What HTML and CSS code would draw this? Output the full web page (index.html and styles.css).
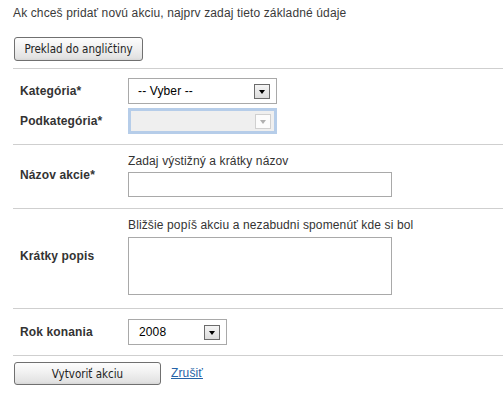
FILE: index.html
```html
<!DOCTYPE html>
<html lang="sk">
<head>
    <meta charset="UTF-8">
    <meta name="viewport" content="width=device-width, initial-scale=1.0">
    <title>Nová akcia</title>
    <link rel="stylesheet" href="styles.css">
</head>
<body>
    <div class="page">
        <p class="intro">Ak chceš pridať novú akciu, najprv zadaj tieto základné údaje</p>

        <div class="top-actions">
            <button type="button" class="btn btn-translate">Preklad do angličtiny</button>
        </div>

        <form class="event-form">
            <!-- Category + subcategory -->
            <div class="form-row row-category">
                <span class="field-label">Kategória*</span>
                <div class="select select-wide">
                    <span class="select-value">-- Vyber --</span>
                    <span class="select-arrow"></span>
                </div>

                <span class="field-label">Podkategória*</span>
                <div class="select select-wide select-disabled">
                    <span class="select-value"></span>
                    <span class="select-arrow"></span>
                </div>
            </div>

            <!-- Name -->
            <div class="form-row row-name">
                <span class="field-label">Názov akcie*</span>
                <div class="field-block">
                    <span class="field-hint">Zadaj výstižný a krátky názov</span>
                    <input type="text" class="text-input">
                </div>
            </div>

            <!-- Description -->
            <div class="form-row row-desc">
                <span class="field-label">Krátky popis</span>
                <div class="field-block field-block-desc">
                    <span class="field-hint">Bližšie popíš akciu a nezabudni spomenúť kde si bol</span>
                    <textarea class="text-area"></textarea>
                </div>
            </div>

            <!-- Year -->
            <div class="form-row row-year">
                <span class="field-label">Rok konania</span>
                <div class="select select-year">
                    <span class="select-value">2008</span>
                    <span class="select-arrow"></span>
                </div>
            </div>

            <div class="form-actions">
                <button type="button" class="btn btn-create">Vytvoriť akciu</button>
                <a href="#" class="cancel-link">Zrušiť</a>
            </div>
        </form>
    </div>
</body>
</html>
```

FILE: styles.css
```css
:root {
    --text-dark: #333;
    --line-color: #cfcfcf;
    --field-border: #a9a9a9;
    --link-color: #2563a8;
}

* {
    margin: 0;
    padding: 0;
    box-sizing: border-box;
}

body {
    font-family: 'Liberation Sans', Arial, sans-serif;
    font-size: 12px;
    line-height: 15px;
    letter-spacing: 0.13px;
    color: var(--text-dark);
    background-color: #fff;
}

.page {
    padding: 6px 0 0 13px;
}

.intro {
    color: #3a3a3a;
}

.top-actions {
    margin-top: 16px;
    padding: 0 0 7px 1px;
}

/* XP style push buttons */
.btn {
    font-family: 'DejaVu Sans Condensed', 'Liberation Sans', sans-serif;
    font-size: 11.5px;
    letter-spacing: 0;
    color: #222;
    background: linear-gradient(#fdfdfd, #f1f1f1 45%, #e2e2e2 90%, #d6d6d6);
    border: 1px solid #707070;
    border-radius: 3px;
    cursor: pointer;
}

.btn-translate {
    width: 129px;
    height: 24px;
}

.btn-create {
    width: 147px;
    height: 23px;
}

.form-row {
    display: grid;
    grid-template-columns: 115px 1fr;
    align-items: center;
    border-top: 1px solid var(--line-color);
}

.field-label {
    padding-left: 7px;
    font-weight: 700;
}

.row-category {
    row-gap: 4px;
    padding: 9px 0 10px;
}

.row-name {
    padding: 9px 0 11px;
}

.row-desc {
    padding: 9px 0 13px;
}

.row-year {
    padding: 10px 0 10px;
}

.field-block {
    display: flex;
    flex-direction: column;
    gap: 3px;
}

.field-block-desc {
    gap: 4px;
}

.text-input,
.text-area {
    width: 264px;
    border: 1px solid var(--field-border);
    background: #fff;
    font-family: inherit;
    font-size: 12px;
}

.text-input {
    height: 25px;
}

.text-area {
    height: 58px;
    resize: none;
}

/* Drop-down boxes */
.select {
    display: flex;
    align-items: center;
    justify-content: space-between;
    height: 26px;
    border: 1px solid var(--field-border);
    background: #fff;
    padding: 0 6px 0 9px;
    color: #000;
}

.select-wide {
    width: 149px;
}

.select-year {
    width: 99px;
    padding-left: 10px;
}

.select-arrow {
    position: relative;
    width: 16px;
    height: 15px;
    border: 1px solid #6b6b6b;
    background: linear-gradient(#f4f4f4, #dcdcdc);
}

.select-arrow::after {
    content: "";
    position: absolute;
    left: 4px;
    top: 5px;
    border-left: 3.5px solid transparent;
    border-right: 3.5px solid transparent;
    border-top: 4px solid #000;
}

.select-disabled {
    border: 3px solid #b6cde9;
    background: #efefef;
    padding-right: 3px;
}

.select-disabled .select-arrow {
    border-color: #d0d0d0;
    background: #fcfcfc;
}

.select-disabled .select-arrow::after {
    border-top-color: #b0b0b0;
}

.form-actions {
    display: flex;
    align-items: center;
    gap: 10px;
    border-top: 1px solid var(--line-color);
    padding: 6px 0 0 1px;
}

.cancel-link {
    color: var(--link-color);
    text-decoration: underline;
}
```
